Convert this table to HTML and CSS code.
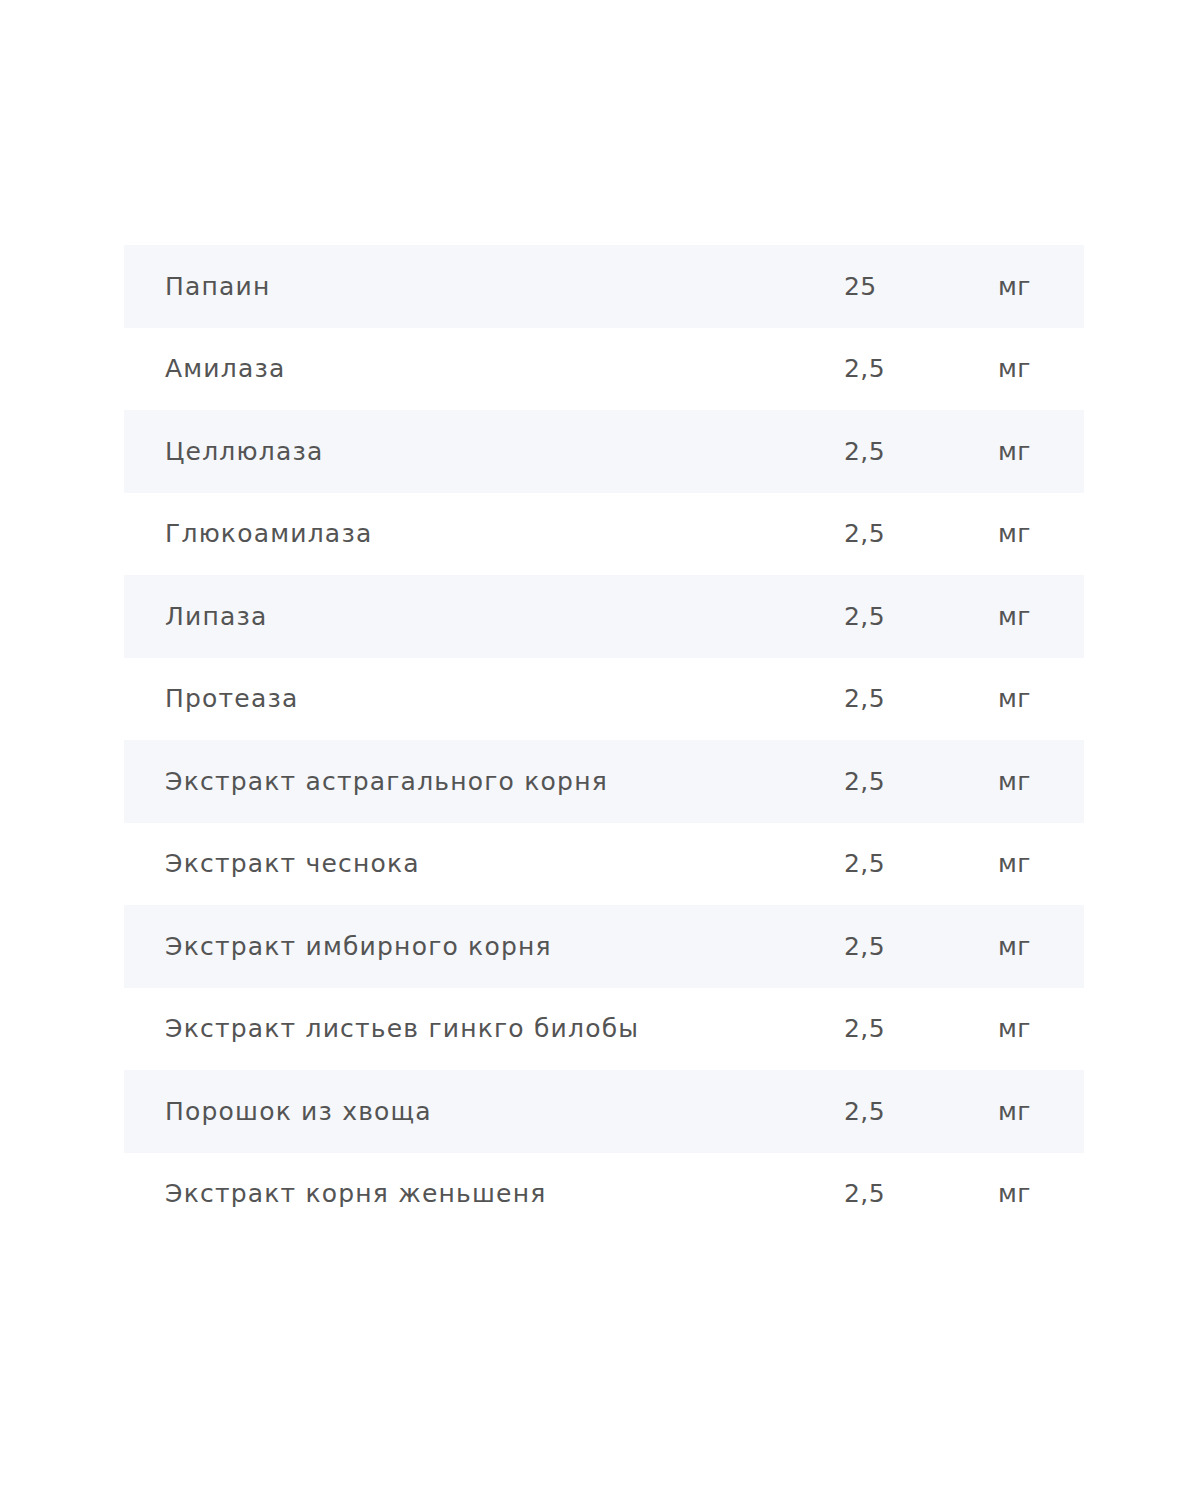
FILE: index.html
```html
<!DOCTYPE html>
<html lang="ru">
<head>
<meta charset="utf-8">
<link rel="stylesheet" href="styles.css">
</head>
<body>
<div class="table">
  <div class="row alt"><span class="name">Папаин</span><span class="qty">25</span><span class="unit">мг</span></div>
  <div class="row"><span class="name">Амилаза</span><span class="qty">2,5</span><span class="unit">мг</span></div>
  <div class="row alt"><span class="name">Целлюлаза</span><span class="qty">2,5</span><span class="unit">мг</span></div>
  <div class="row"><span class="name">Глюкоамилаза</span><span class="qty">2,5</span><span class="unit">мг</span></div>
  <div class="row alt"><span class="name">Липаза</span><span class="qty">2,5</span><span class="unit">мг</span></div>
  <div class="row"><span class="name">Протеаза</span><span class="qty">2,5</span><span class="unit">мг</span></div>
  <div class="row alt"><span class="name">Экстракт астрагального корня</span><span class="qty">2,5</span><span class="unit">мг</span></div>
  <div class="row"><span class="name">Экстракт чеснока</span><span class="qty">2,5</span><span class="unit">мг</span></div>
  <div class="row alt"><span class="name">Экстракт имбирного корня</span><span class="qty">2,5</span><span class="unit">мг</span></div>
  <div class="row"><span class="name">Экстракт листьев гинкго билобы</span><span class="qty">2,5</span><span class="unit">мг</span></div>
  <div class="row alt"><span class="name">Порошок из хвоща</span><span class="qty">2,5</span><span class="unit">мг</span></div>
  <div class="row"><span class="name">Экстракт корня женьшеня</span><span class="qty">2,5</span><span class="unit">мг</span></div>
</div>
</body>
</html>
```
FILE: styles.css
```css
html, body {
  margin: 0;
  padding: 0;
  background: #ffffff;
}
body {
  font-family: "DejaVu Sans", "Noto Sans", sans-serif;
  color: #545454;
}
.table {
  margin: 245px 0 0 124px;
  width: 960px;
  display: flex;
  flex-direction: column;
}
.row {
  height: 82.5px;
  display: grid;
  grid-template-columns: 679px 154px 1fr;
  align-items: center;
  padding-left: 41px;
  font-size: 25px;
  line-height: 1;
}
.row.alt {
  background: #f5f7fa;
}
.name {
  letter-spacing: 1.2px;
}
.qty,
.unit {
  letter-spacing: 0.4px;
}
```
